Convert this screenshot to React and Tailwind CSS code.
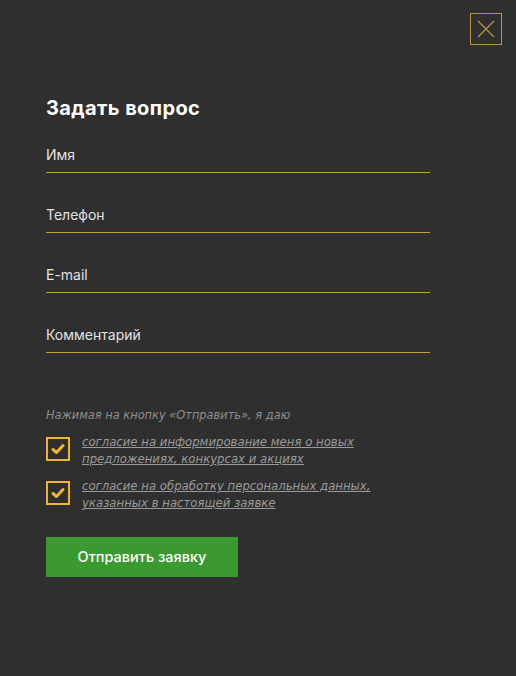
import React from "react";

function Field({ label }) {
  return (
    <div className="w-[384px] border-b border-[#c9a23e] pb-[7px]">
      <span className="block text-[14px] leading-[20px] text-[#e2e2e2]" style={{ fontFamily: "Inter, 'Noto Sans', sans-serif" }}>
        {label}
      </span>
    </div>
  );
}

function Check({ children }) {
  return (
    <div className="flex items-start gap-[12px]">
      <div className="mt-[2.5px] flex h-[24px] w-[24px] shrink-0 items-center justify-center border-2 border-[#efb52f]">
        <svg width="14" height="12" viewBox="0 0 14 12">
          <path d="M2 6.5 L5.5 9.5 L12 2.5" fill="none" stroke="#efb52f" strokeWidth="3" strokeLinecap="round" strokeLinejoin="round" />
        </svg>
      </div>
      <a className="text-[11.7px] leading-[17px] italic text-[#9a9a9a] underline" style={{ fontFamily: "'DejaVu Sans', Verdana, sans-serif" }}>
        {children}
      </a>
    </div>
  );
}

export default function App() {
  return (
    <div className="relative h-[676px] w-[516px] bg-[#2f2f2f] pl-[46px] pt-[96px]">
      <button className="absolute right-[14px] top-[13px] flex h-[32px] w-[32px] items-center justify-center border border-[#b8953a]">
        <svg width="18" height="18" viewBox="0 0 18 18">
          <path d="M1 1 L17 17 M17 1 L1 17" stroke="#b8953a" strokeWidth="1.2" />
        </svg>
      </button>
      <h2 className="text-[20px] font-bold leading-[24px] tracking-[0.4px] text-white" style={{ fontFamily: "Inter, 'Noto Sans', sans-serif" }}>
        Задать вопрос
      </h2>
      <div className="mt-[25px] flex flex-col gap-[32px]">
        <Field label="Имя" />
        <Field label="Телефон" />
        <Field label="E-mail" />
        <Field label="Комментарий" />
      </div>
      <p className="mt-[54px] text-[11.4px] leading-[16px] italic text-[#8d8d8d]" style={{ fontFamily: "'DejaVu Sans', Verdana, sans-serif" }}>
        Нажимая на кнопку «Отправить», я даю
      </p>
      <div className="mt-[11px] flex w-[340px] flex-col gap-[10px]">
        <Check>согласие на информирование меня о новых предложениях, конкурсах и акциях</Check>
        <Check>согласие на обработку персональных данных, указанных в настоящей заявке</Check>
      </div>
      <button className="mt-[25px] flex h-[40px] w-[192px] items-center justify-center bg-[#3a9a31] text-[14.5px] font-medium text-white" style={{ fontFamily: "Inter, 'Noto Sans', sans-serif" }}>
        Отправить заявку
      </button>
    </div>
  );
}
